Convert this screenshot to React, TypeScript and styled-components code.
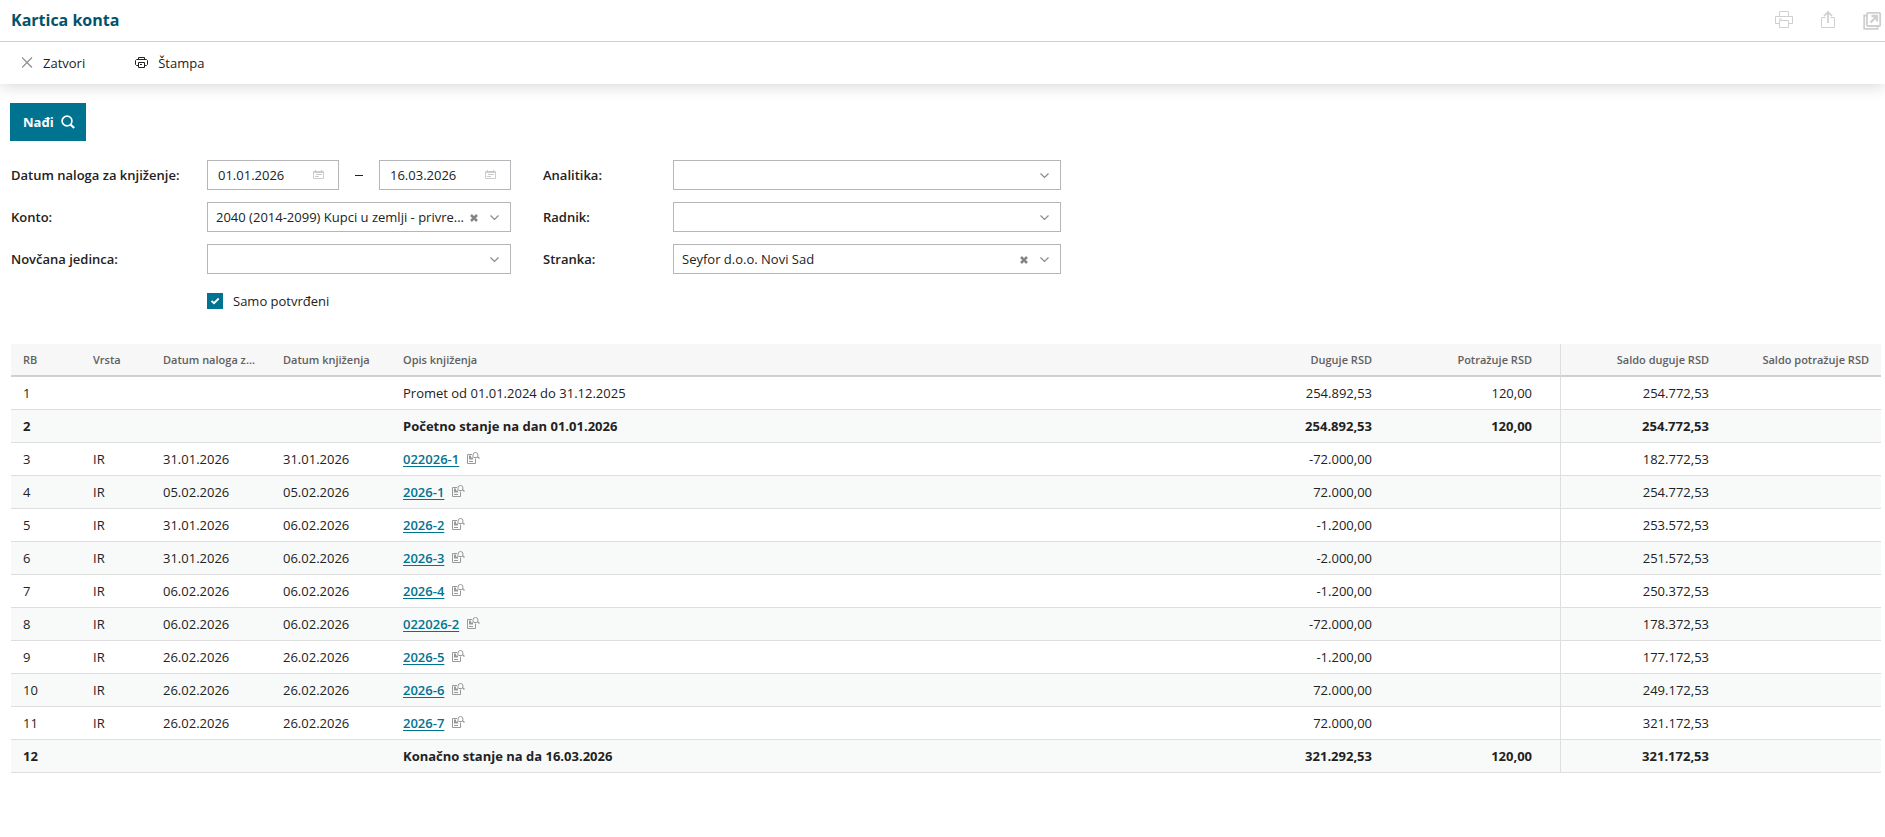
import React, { useState } from "react";
import styled, { createGlobalStyle } from "styled-components";

const GlobalStyle = createGlobalStyle`
  *, *::before, *::after { box-sizing: border-box; }
  body {
    margin: 0;
    background: #fff;
    color: #222;
    font-family: "Open Sans", "Noto Sans", sans-serif;
    font-size: 13px;
    line-height: 20px;
  }
  button, input, select { font: inherit; color: inherit; margin: 0; }
  svg { display: block; flex: none; }
`;

const Header = styled.header`
  display: flex;
  align-items: center;
  justify-content: space-between;
  height: 42px;
  padding: 0 3px 1px 11px;
  border-bottom: 1px solid #d0d0d0;
`;

const Title = styled.h1`
  margin: 0;
  padding-bottom: 1px;
  font-size: 16px;
  line-height: 24px;
  font-weight: 700;
  color: #00546b;
`;

const HeaderActions = styled.div`
  display: flex;
  align-items: center;
  gap: 28px;
`;

const IconButton = styled.button`
  display: flex;
  align-items: center;
  justify-content: center;
  padding: 0;
  border: 0;
  background: none;
  color: #cfcfcf;
  cursor: pointer;
`;

const Toolbar = styled.nav`
  display: flex;
  align-items: center;
  gap: 50px;
  height: 42px;
  padding: 0 22px;
  box-shadow: 0 0 18px rgba(0, 0, 0, 0.2);
  clip-path: inset(0 0 -20px 0);
`;

const ToolButton = styled.button`
  display: flex;
  align-items: center;
  gap: 10px;
  padding: 0;
  border: 0;
  background: none;
  cursor: pointer;
`;

const SearchBar = styled.div`
  padding: 19px 10px;
`;

const SearchButton = styled.button`
  display: flex;
  align-items: center;
  gap: 7px;
  height: 38px;
  padding: 0 11px 0 13px;
  border: 0;
  background: #007391;
  color: #fff;
  font-weight: 700;
  cursor: pointer;
`;

const Filters = styled.form`
  display: grid;
  grid-template-columns: 196px minmax(0, 304px) 130px minmax(0, 388px);
  row-gap: 12px;
  align-items: center;
  padding: 0 11px;
`;

const Label = styled.label`
  font-weight: 600;
`;

const SecondLabel = styled(Label)`
  padding-left: 32px;
  margin-right: -32px;
`;

const SecondField = styled.div`
  margin-left: 32px;
  margin-right: -32px;
`;

const DateRange = styled.div`
  display: flex;
  align-items: center;
  justify-content: space-between;
`;

const Dash = styled.span`
  width: 8px;
  height: 1px;
  background: #222;
`;

const FieldBox = styled.div`
  display: flex;
  align-items: center;
  position: relative;
  height: 30px;
  border: 1px solid #b6b6ba;
  background: #fff;
`;

const DateBox = styled(FieldBox)`
  width: 132px;
  justify-content: space-between;
  padding: 0 14px 0 10px;
`;

const DateInput = styled.input`
  width: 80px;
  height: 28px;
  padding: 0;
  border: 0;
  outline: 0;
  background: none;
`;

const SelectControl = styled.select`
  appearance: none;
  width: 100%;
  height: 28px;
  padding: 0 44px 0 8px;
  border: 0;
  border-radius: 0;
  outline: 0;
  background: none;
  text-overflow: ellipsis;
`;

const SelectIcons = styled.div`
  position: absolute;
  top: 1px;
  bottom: 0;
  right: 10px;
  display: flex;
  align-items: center;
  gap: 12px;
  color: #8a8a8a;
  pointer-events: none;
`;

const ClearButton = styled(IconButton)`
  color: #858585;
  pointer-events: auto;
`;

const CheckLabel = styled.label`
  grid-column: 2;
  display: flex;
  align-items: center;
  gap: 10px;
  height: 30px;
`;

const CheckBoxWrap = styled.span`
  display: grid;
  place-items: center;
  & > * { grid-area: 1 / 1; }
  & > svg { pointer-events: none; z-index: 1; }
`;

const CheckBox = styled.input`
  appearance: none;
  width: 16px;
  height: 16px;
  border: 1px solid #007391;
  background: #fff;
  &:checked { background: #007391; }
`;

const TableArea = styled.section`
  padding: 28px 4px 40px 11px;
`;

const Table = styled.table`
  width: 100%;
  table-layout: fixed;
  border-collapse: separate;
  border-spacing: 0;
`;

const Col = styled.col<{ $width?: number }>`
  ${(p) => (p.$width ? `width: ${p.$width}px;` : "")}
`;

type CellProps = { $right?: boolean; $divider?: boolean };

const HeadCell = styled.th<CellProps>`
  height: 33px;
  padding: 0 ${(p) => (p.$divider ? 28 : 12)}px 0 12px;
  border-bottom: 2px solid #d0d0d0;
  border-right: ${(p) => (p.$divider ? "1px solid #dedede" : "0")};
  background: #f7f7f7;
  color: #606060;
  font-size: 11px;
  font-weight: 600;
  line-height: 16px;
  text-align: ${(p) => (p.$right ? "right" : "left")};
  white-space: nowrap;
`;

const Row = styled.tr<{ $bold?: boolean }>`
  font-weight: ${(p) => (p.$bold ? 700 : 400)};
  &:nth-child(even) { background: #f8faf9; }
`;

const Cell = styled.td<CellProps>`
  height: 33px;
  padding: 0 ${(p) => (p.$divider ? 28 : 12)}px 0 12px;
  border-bottom: 1px solid #dedede;
  border-right: ${(p) => (p.$divider ? "1px solid #dedede" : "0")};
  text-align: ${(p) => (p.$right ? "right" : "left")};
  white-space: nowrap;
`;

const DocCell = styled.div`
  display: flex;
  align-items: center;
  gap: 8px;
`;

const DocLink = styled.a`
  color: #007391;
  font-weight: 600;
  text-decoration: underline;
  text-underline-offset: 2px;
`;

const PreviewButton = styled(IconButton)`
  padding-bottom: 2px;
`;

const PrinterLarge = () => (
  <svg width="18" height="18" viewBox="0 0 18 18" fill="none" stroke="currentColor">
    <path d="M4.500 5.500V.5h9v5M4.500 12.500h-4v-7h17v7h-4M4.500 9.500h9v7h-9zM4 8h3" />
  </svg>
);

const ShareIcon = () => (
  <svg width="14" height="18" viewBox="0 0 14 18" fill="none" stroke="currentColor">
    <path d="M4.500 6.500h-4v10h13v-10h-4" />
    <path d="M7 12V1.500M3 5l4-4 4 4" strokeWidth="1.700" />
  </svg>
);

const PopOutIcon = () => (
  <svg width="19" height="19" viewBox="0 0 19 19" fill="none" stroke="currentColor">
    <path d="M4 4.500H1.200v13.300h13.300V15" strokeWidth="1.800" />
    <rect x="4" y="1.800" width="13.200" height="13.200" rx="1" strokeWidth="1.800" />
    <path d="M7.500 11.500l6-6M8.500 5H14v5.500" strokeWidth="2.300" />
  </svg>
);

const CloseIcon = () => (
  <svg width="11" height="13" viewBox="0 0 11 13" fill="none" stroke="#8c8c8c">
    <path d="M0 .5l10 10M10 .5l-10 10" strokeWidth="1.200" />
  </svg>
);

const PrinterSmall = () => (
  <svg width="13" height="12" viewBox="0 0 13 12" fill="none" stroke="#222">
    <path d="M3.500 2.500v-2h6v2M3.500 8.500h-2l-1-1v-4l1-1h10l1 1v4l-1 1h-2M3.500 5.500h6v5h-6zM5 7.500h2" />
  </svg>
);

const SearchIcon = () => (
  <svg width="14" height="14" viewBox="0 0 14 14" fill="none" stroke="currentColor">
    <circle cx="6" cy="6" r="4.900" strokeWidth="1.700" />
    <path d="M9.500 9.500l3.700 3.500" strokeWidth="2.200" />
  </svg>
);

const CalendarIcon = () => (
  <svg width="11" height="10" viewBox="0 0 11 10" fill="none" stroke="#cccccc">
    <path d="M.5 1.500h10v7H.5zM.5 2.500h10M2.500 0v2M8.500 0v2M3 4.500h6M2 6.500h4" />
  </svg>
);

const ChevronIcon = () => (
  <svg width="10" height="6" viewBox="0 0 10 6" fill="none" stroke="currentColor">
    <path d="M.5.5 4.500 4.500 8.500.5" strokeWidth="1.200" />
  </svg>
);

const ClearIcon = () => (
  <svg width="8" height="8" viewBox="0 0 8 8" fill="none" stroke="currentColor">
    <path d="M1 1l6 6M7 1 1 7" strokeWidth="2.500" />
  </svg>
);

const CheckIcon = () => (
  <svg width="10" height="8" viewBox="0 0 10 8" fill="none" stroke="#fff">
    <path d="M1.500 3.800 4 6.200 8.700 1.500" strokeWidth="1.800" />
  </svg>
);

const PreviewIcon = () => (
  <svg width="13" height="12" viewBox="0 0 13 12" fill="none" stroke="#999">
    <path d="M5 2.500H.5v9h8V6.500" />
    <path d="M2 3.500h2v2h2v2H2z" fill="#999" stroke="none" />
    <path d="M2 9.500h4" />
    <path d="M6 5.500V3a2.500 2.500 0 0 1 5 0c0 1-.5 1.800-1.200 2.500H6.500" />
    <path d="M10.300 4.600l2.200 2" strokeWidth="1.300" />
  </svg>
);

type SelectProps = { id: string; value?: string };

function SelectField({ id, value = "" }: SelectProps) {
  const [current, setCurrent] = useState(value);
  return (
    <FieldBox>
      <SelectControl id={id} value={current} onChange={(e) => setCurrent(e.target.value)}>
        <option value="" />
        {value && <option value={value}>{value}</option>}
      </SelectControl>
      <SelectIcons>
        {current && (
          <ClearButton type="button" aria-label="Obriši" onClick={() => setCurrent("")}>
            <ClearIcon />
          </ClearButton>
        )}
        <ChevronIcon />
      </SelectIcons>
    </FieldBox>
  );
}

function DateField({ id, value, label }: { id: string; value: string; label?: string }) {
  return (
    <DateBox>
      <DateInput id={id} type="text" defaultValue={value} aria-label={label} />
      <CalendarIcon />
    </DateBox>
  );
}

type Entry = {
  type?: string;
  orderDate?: string;
  postDate?: string;
  text: string;
  link?: boolean;
  bold?: boolean;
  debit: string;
  credit?: string;
  balance: string;
};

const doc = (orderDate: string, postDate: string, text: string, debit: string, balance: string): Entry => ({
  type: "IR", orderDate, postDate, text, link: true, debit, balance,
});

const entries: Entry[] = [
  { text: "Promet od 01.01.2024 do 31.12.2025", debit: "254.892,53", credit: "120,00", balance: "254.772,53" },
  { text: "Početno stanje na dan 01.01.2026", bold: true, debit: "254.892,53", credit: "120,00", balance: "254.772,53" },
  doc("31.01.2026", "31.01.2026", "022026-1", "-72.000,00", "182.772,53"),
  doc("05.02.2026", "05.02.2026", "2026-1", "72.000,00", "254.772,53"),
  doc("31.01.2026", "06.02.2026", "2026-2", "-1.200,00", "253.572,53"),
  doc("31.01.2026", "06.02.2026", "2026-3", "-2.000,00", "251.572,53"),
  doc("06.02.2026", "06.02.2026", "2026-4", "-1.200,00", "250.372,53"),
  doc("06.02.2026", "06.02.2026", "022026-2", "-72.000,00", "178.372,53"),
  doc("26.02.2026", "26.02.2026", "2026-5", "-1.200,00", "177.172,53"),
  doc("26.02.2026", "26.02.2026", "2026-6", "72.000,00", "249.172,53"),
  doc("26.02.2026", "26.02.2026", "2026-7", "72.000,00", "321.172,53"),
  { text: "Konačno stanje na da 16.03.2026", bold: true, debit: "321.292,53", credit: "120,00", balance: "321.172,53" },
];

export default function App() {
  return (
    <>
      <GlobalStyle />
      <Header>
        <Title>Kartica konta</Title>
        <HeaderActions>
          <IconButton type="button" aria-label="Štampa"><PrinterLarge /></IconButton>
          <IconButton type="button" aria-label="Izvoz"><ShareIcon /></IconButton>
          <IconButton type="button" aria-label="Novi prozor"><PopOutIcon /></IconButton>
        </HeaderActions>
      </Header>
      <Toolbar>
        <ToolButton type="button"><CloseIcon />Zatvori</ToolButton>
        <ToolButton type="button"><PrinterSmall />Štampa</ToolButton>
      </Toolbar>
      <main>
        <SearchBar>
          <SearchButton type="submit" form="filters">Nađi<SearchIcon /></SearchButton>
        </SearchBar>
        <Filters id="filters" onSubmit={(e) => e.preventDefault()}>
          <Label htmlFor="from">Datum naloga za knjiženje:</Label>
          <DateRange>
            <DateField id="from" value="01.01.2026" />
            <Dash />
            <DateField id="to" value="16.03.2026" label="Datum do" />
          </DateRange>
          <SecondLabel htmlFor="analytics">Analitika:</SecondLabel>
          <SecondField><SelectField id="analytics" /></SecondField>

          <Label htmlFor="account">Konto:</Label>
          <SelectField id="account" value="2040 (2014-2099) Kupci u zemlji - privre..." />
          <SecondLabel htmlFor="worker">Radnik:</SecondLabel>
          <SecondField><SelectField id="worker" /></SecondField>

          <Label htmlFor="currency">Novčana jedinca:</Label>
          <SelectField id="currency" />
          <SecondLabel htmlFor="customer">Stranka:</SecondLabel>
          <SecondField><SelectField id="customer" value="Seyfor d.o.o. Novi Sad" /></SecondField>

          <CheckLabel>
            <CheckBoxWrap>
              <CheckBox type="checkbox" defaultChecked />
              <CheckIcon />
            </CheckBoxWrap>
            Samo potvrđeni
          </CheckLabel>
        </Filters>
        <TableArea>
          <Table>
            <colgroup>
              <Col $width={70} />
              <Col $width={70} />
              <Col $width={120} />
              <Col $width={120} />
              <Col />
              <Col $width={160} />
              <Col $width={177} />
              <Col $width={160} />
              <Col $width={160} />
            </colgroup>
            <thead>
              <tr>
                <HeadCell>RB</HeadCell>
                <HeadCell>Vrsta</HeadCell>
                <HeadCell>Datum naloga z...</HeadCell>
                <HeadCell>Datum knjiženja</HeadCell>
                <HeadCell>Opis knjiženja</HeadCell>
                <HeadCell $right>Duguje RSD</HeadCell>
                <HeadCell $right $divider>Potražuje RSD</HeadCell>
                <HeadCell $right>Saldo duguje RSD</HeadCell>
                <HeadCell $right>Saldo potražuje RSD</HeadCell>
              </tr>
            </thead>
            <tbody>
              {entries.map((e, i) => (
                <Row key={i} $bold={e.bold}>
                  <Cell>{i + 1}</Cell>
                  <Cell>{e.type}</Cell>
                  <Cell>{e.orderDate}</Cell>
                  <Cell>{e.postDate}</Cell>
                  <Cell>
                    {e.link ? (
                      <DocCell>
                        <DocLink href="#">{e.text}</DocLink>
                        <PreviewButton type="button" aria-label="Pregled"><PreviewIcon /></PreviewButton>
                      </DocCell>
                    ) : (
                      e.text
                    )}
                  </Cell>
                  <Cell $right>{e.debit}</Cell>
                  <Cell $right $divider>{e.credit}</Cell>
                  <Cell $right>{e.balance}</Cell>
                  <Cell $right />
                </Row>
              ))}
            </tbody>
          </Table>
        </TableArea>
      </main>
    </>
  );
}
